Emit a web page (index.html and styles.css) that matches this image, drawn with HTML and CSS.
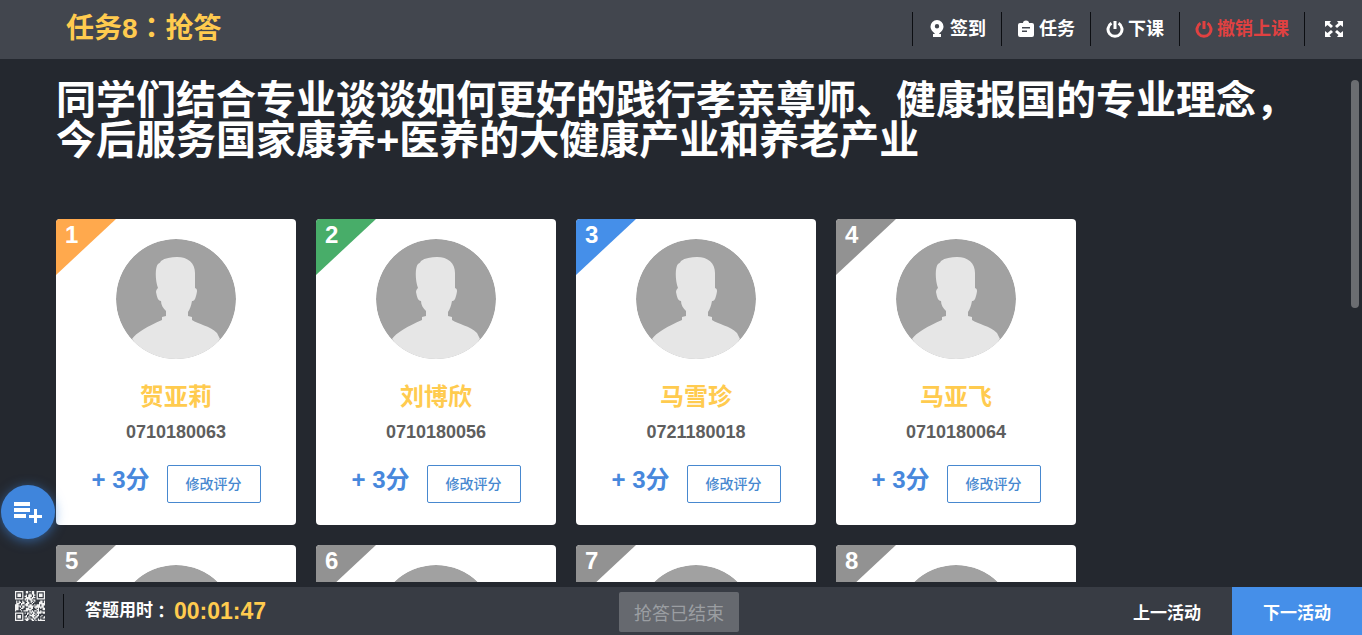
FILE: index.html
```html
<!DOCTYPE html>
<html lang="zh-CN">
<head>
<meta charset="utf-8">
<title>任务8：抢答</title>
<link rel="stylesheet" href="styles.css">
</head>
<body>
<svg class="defs" aria-hidden="true">
  <symbol id="avatar" viewBox="0 0 120 120">
    <circle cx="60" cy="60" r="60" fill="#a1a1a1"/>
    <path fill="#e6e6e6" d="M45 22C49 19 55 18 61 18C72 18 79 24 79 34V49C82 50 81 53 80 57C79 61 78 62 76 62C75 67 74 70 72 73V77L76 78V81C82 85 94 87 101 94L104 100Q90 122 60 122Q30 122 16 100C20 94 32 87 46 81V78L50 77V72C47 69 45 66 45 62C42 62 41 58 40 53C40 51 41 50 42 49C39 41 39 28 42 25C43 24 44 24 45 22Z"/>
  </symbol>
  <symbol id="power" viewBox="0 0 18 18">
    <path d="M5.5 3.3A7 7 0 1 0 12.500 3.300M9 1V9" fill="none" stroke="currentColor" stroke-width="3"/>
  </symbol>
</svg>
<header class="topbar">
  <h1 class="topbar-title">任务8<span class="mid" lang="zh-TW">：</span>抢答</h1>
  <nav class="topbar-nav">
    <button class="nav-item" type="button"><svg class="icon" viewBox="0 0 18 18"><path fill="currentColor" fill-rule="evenodd" d="M9 0a6.500 6.500 0 0 0-6.500 6.500c0 3.500 2.500 5 4.500 7.500H5V17h8v-3h-2c2-2.500 4.500-4 4.500-7.500A6.500 6.500 0 0 0 9 0zM9 4a2.200 2.200 0 1 1 0 4.400a2.200 2.200 0 0 1 0-4.400z"/></svg>签到</button>
    <button class="nav-item" type="button"><svg class="icon" viewBox="0 0 18 18"><path fill="currentColor" fill-rule="evenodd" d="M6 3a3 2.500 0 0 1 6 0h3a2 2 0 0 1 2 2v10a2 2 0 0 1-2 2H3a2 2 0 0 1-2-2V5a2 2 0 0 1 2-2zM5 7v1.500h8V7zM5 10.500V12h5v-1.500z"/></svg>任务</button>
    <button class="nav-item" type="button"><svg class="icon"><use href="#power"/></svg>下课</button>
    <button class="nav-item danger" type="button"><svg class="icon"><use href="#power"/></svg>撤销上课</button>
    <button class="nav-item full" type="button" aria-label="全屏"><svg class="icon" viewBox="0 0 18 18"><path fill="currentColor" d="M0 1h6L4.500 3L8 6L6 8L2.500 5L0 7zM18 1h-6l1.500 2L10 6l2 2l3.500-3L18 7zM0 17h6l-1.500-2L8 12l-2-2l-3.500 3L0 11zM18 17h-6l1.500-2L10 12l2-2l3.500 3L18 11z"/></svg></button>
  </nav>
</header>
<main class="stage">
  <div class="scroller">
    <h2 class="question">同学们结合专业谈谈如何更好的践行孝亲尊师、健康报国的专业理念，今后服务国家康养+医养的大健康产业和养老产业</h2>
    <ul class="cards">
      <li class="card"><span class="rank gold">1</span><svg class="avatar"><use href="#avatar"/></svg><h3 class="name">贺亚莉</h3><p class="number">0710180063</p><div class="score"><span class="points">+ 3分</span><button class="edit" type="button">修改评分</button></div></li>
      <li class="card"><span class="rank green">2</span><svg class="avatar"><use href="#avatar"/></svg><h3 class="name">刘博欣</h3><p class="number">0710180056</p><div class="score"><span class="points">+ 3分</span><button class="edit" type="button">修改评分</button></div></li>
      <li class="card"><span class="rank blue">3</span><svg class="avatar"><use href="#avatar"/></svg><h3 class="name">马雪珍</h3><p class="number">0721180018</p><div class="score"><span class="points">+ 3分</span><button class="edit" type="button">修改评分</button></div></li>
      <li class="card"><span class="rank">4</span><svg class="avatar"><use href="#avatar"/></svg><h3 class="name">马亚飞</h3><p class="number">0710180064</p><div class="score"><span class="points">+ 3分</span><button class="edit" type="button">修改评分</button></div></li>
      <li class="card"><span class="rank">5</span><svg class="avatar"><use href="#avatar"/></svg></li>
      <li class="card"><span class="rank">6</span><svg class="avatar"><use href="#avatar"/></svg></li>
      <li class="card"><span class="rank">7</span><svg class="avatar"><use href="#avatar"/></svg></li>
      <li class="card"><span class="rank">8</span><svg class="avatar"><use href="#avatar"/></svg></li>
    </ul>
  </div>
  <div class="thumb"></div>
</main>
<button class="fab" type="button" aria-label="添加活动"><svg class="fab-icon" viewBox="0 0 30 22"><path fill="currentColor" d="M1 1h16v4H1zM1 7h16v4H1zM1 13h12v4H1zM21 8h3v6h5v3h-5v5h-3v-5h-5v-3h5z"/></svg></button>
<footer class="bottombar">
  <div class="status">
    <button class="qr" type="button" aria-label="二维码"><svg class="qr-icon" id="qr" viewBox="0 0 25 25"></svg></button>
    <p class="timer">答题用时<span class="mid" lang="zh-TW">：</span><span class="clock">00:01:47</span></p>
  </div>
  <button class="ended" type="button" disabled>抢答已结束</button>
  <div class="pager">
    <button class="page" type="button">上一活动</button>
    <button class="page next" type="button">下一活动</button>
  </div>
</footer>
<script src="qr.js"></script>
</body>
</html>
```
FILE: styles.css
```css
* { box-sizing: border-box; }
body {
  margin: 0;
  height: 100vh;
  display: flex;
  flex-direction: column;
  overflow: hidden;
  background: #24282f;
  color: #fff;
  font-family: "Liberation Sans", "Noto Sans CJK SC", sans-serif;
  font-weight: 700;
}
button { font: inherit; color: inherit; border: 0; background: none; padding: 0; cursor: pointer; }
h1, h2, h3, p, ul { margin: 0; padding: 0; }
.defs { position: absolute; width: 0; height: 0; }
.mid { font-family: "Noto Sans CJK TC", sans-serif; line-height: 0; }

.topbar {
  flex: none;
  height: 59px;
  padding: 0 19px 1px 66px;
  display: flex;
  align-items: center;
  justify-content: space-between;
  background: #42464e;
}
.topbar-title { font-size: 28px; line-height: 58px; color: #ffcb4f; }
.topbar-nav { display: flex; }
.nav-item {
  display: flex;
  align-items: center;
  gap: 4px;
  height: 34px;
  padding: 0 15px;
  border-left: 1px solid #0c0e12;
  font-size: 18px;
  line-height: 34px;
}
.icon { width: 18px; height: 18px; }
.danger { color: #e04141; }
.full { padding: 0 0 0 20px; }

.stage { flex: 1; min-height: 0; position: relative; padding: 21px 56px 0; margin-bottom: 5px; }
.scroller { height: 100%; overflow: hidden; }
.question { font-size: 40px; line-height: 40px; }
.cards { display: flex; flex-wrap: wrap; gap: 20px; margin-top: 59px; list-style: none; }
.card {
  position: relative;
  width: 240px;
  height: 306px;
  padding-top: 20px;
  border-radius: 4px;
  overflow: hidden;
  background: #fff;
  text-align: center;
}
.rank {
  position: absolute;
  left: 0;
  top: 0;
  width: 60px;
  height: 56px;
  padding-left: 9px;
  background: #929292;
  clip-path: polygon(0 0, 100% 0, 0 100%);
  font-size: 24px;
  line-height: 32px;
  text-align: left;
}
.gold { background: #ffa94d; }
.green { background: #48ad69; }
.blue { background: #458fe9; }
.avatar { display: block; width: 120px; height: 120px; margin: 0 auto; border-radius: 50%; overflow: hidden; }
.name { margin-top: 20px; font-size: 24px; line-height: 36px; color: #ffcb4f; }
.number { margin-top: 4px; font-size: 18px; line-height: 26px; color: #5e5e5e; }
.score { display: flex; justify-content: center; gap: 17px; margin-top: 20px; }
.points { font-size: 24px; line-height: 30px; color: #4788dc; }
.edit {
  width: 94px;
  height: 38px;
  padding-bottom: 2px;
  border: 1px solid #4788cf;
  border-radius: 2px;
  color: #4788cf;
  font-size: 14px;
  font-weight: 500;
}
.thumb {
  position: absolute;
  right: 3px;
  top: 21px;
  width: 8px;
  height: 228px;
  border-radius: 4px;
  background: #6b6d71;
}

.fab {
  position: absolute;
  left: 1px;
  bottom: 96px;
  width: 54px;
  height: 54px;
  display: flex;
  align-items: center;
  justify-content: center;
  border-radius: 50%;
  background: #3f85dc;
  box-shadow: 0 2px 12px rgba(63, 133, 220, 0.6);
}
.fab-icon { width: 30px; height: 22px; }

.bottombar {
  flex: none;
  height: 48px;
  display: grid;
  grid-template-columns: 1fr auto 1fr;
  align-items: center;
  background: #383c44;
}
.status { display: flex; align-items: center; height: 48px; }
.qr { align-self: flex-start; padding: 4px 18px 0 15px; }
.qr-icon { display: block; width: 30px; height: 30px; }
.timer {
  display: flex;
  align-items: center;
  height: 34px;
  padding-left: 21px;
  border-left: 1px solid #0c0e12;
  font-size: 17px;
  line-height: 34px;
}
.timer .mid { line-height: 34px; }
.clock { margin-left: 4px; font-size: 23px; color: #ffcb4f; }
.ended {
  width: 120px;
  height: 40px;
  margin: 2px 4px 0 0;
  border-radius: 2px;
  background: #66696f;
  color: #9b9ea2;
  font-size: 18px;
  font-weight: 400;
}
.pager { display: flex; justify-content: flex-end; }
.page { width: 130px; height: 48px; font-size: 17px; }
.next { background: #458fe9; }
```
FILE: qr.js
```js
// Builds a 25-module code: three finder squares plus filled data cells.
const n = 25;
let seed = 11;
let d = "";
function finder(x, y) {
  for (const [cx, cy] of [[3, 3], [n - 4, 3], [3, n - 4]]) {
    const r = Math.max(Math.abs(x - cx), Math.abs(y - cy));
    if (r <= 4) return r === 3 || r <= 1 ? 1 : 0;
  }
  return -1;
}
for (let y = 0; y < n; y++) {
  for (let x = 0; x < n; x++) {
    seed = (seed * 1103515245 + 12345) % 2147483648;
    const f = finder(x, y);
    if (f === 1 || (f < 0 && seed / 2147483648 > 0.42)) d += `M${x} ${y}h1v1h-1z`;
  }
}
document.getElementById("qr").innerHTML = `<path fill="#f4f4f4" d="${d}"/>`;
```
